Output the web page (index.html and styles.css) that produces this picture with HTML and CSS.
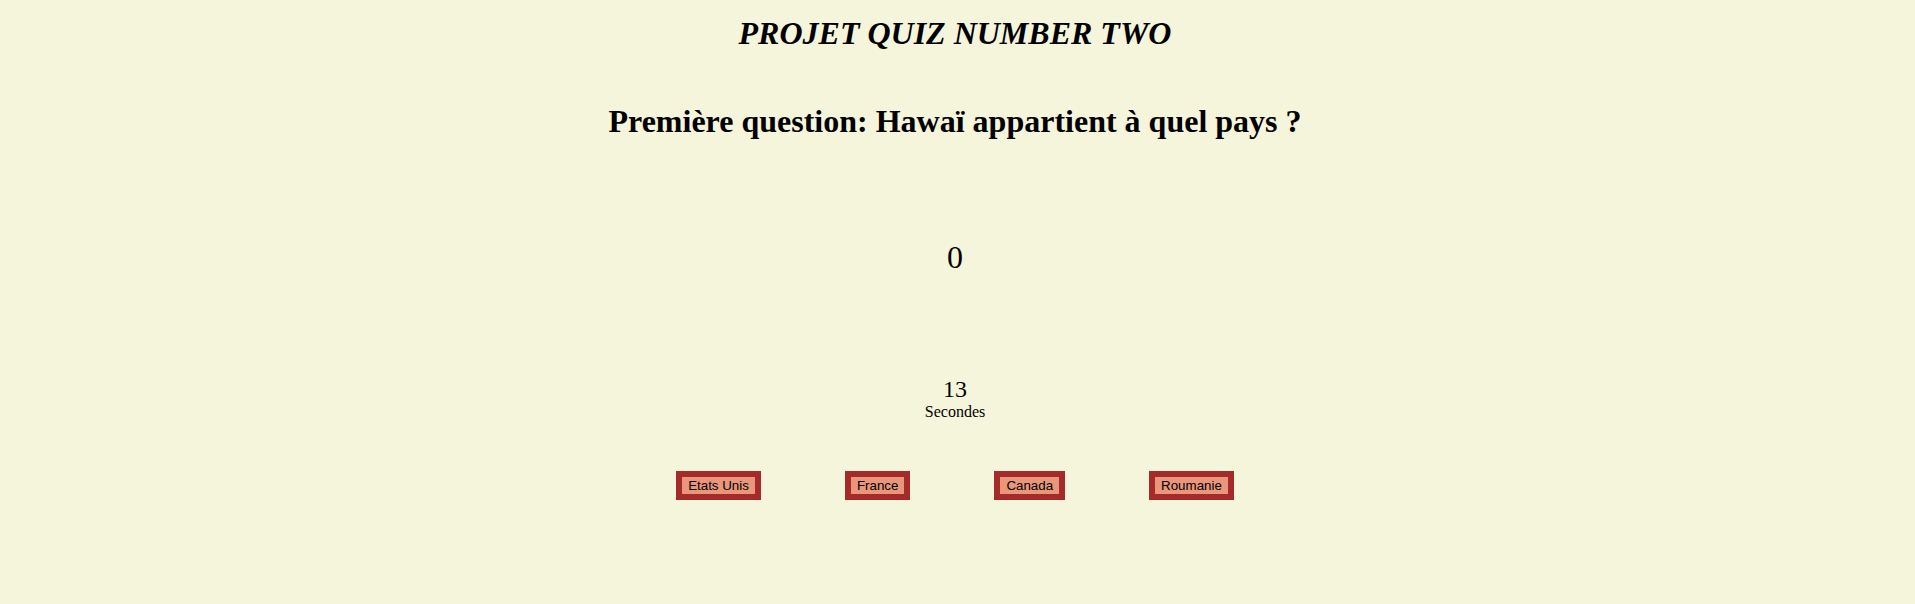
FILE: index.html
```html
<!DOCTYPE html>
<html lang="fr">
<head>
<meta charset="utf-8">
<title>Projet Quiz</title>
<link rel="stylesheet" href="styles.css">
</head>
<body>
<main class="quiz">
  <h1 class="quiz-title">PROJET QUIZ NUMBER TWO</h1>
  <h2 class="question">Première question: Hawaï appartient à quel pays ?</h2>
  <div class="score">0</div>
  <div class="timer">
    <div class="timer-value">13</div>
    <div class="timer-label">Secondes</div>
  </div>
  <div class="answers">
    <button class="answer">Etats Unis</button>
    <button class="answer">France</button>
    <button class="answer">Canada</button>
    <button class="answer">Roumanie</button>
  </div>
</main>
</body>
</html>
```
FILE: styles.css
```css
html, body {
  margin: 0;
  padding: 0;
}
body {
  background: #f5f5dc;
  font-family: "Liberation Serif", "Times New Roman", serif;
  color: #000;
  min-height: 604px;
}
.quiz {
  padding: 0 13px 0 8px;
  text-align: center;
  display: flex;
  flex-direction: column;
  align-items: stretch;
}
.quiz-title {
  margin: 15px 0 0;
  font-size: 32px;
  line-height: 37px;
  font-weight: bold;
  font-style: italic;
}
.question {
  margin: 51px 0 0;
  font-size: 32px;
  line-height: 37px;
  font-weight: bold;
}
.score {
  margin-top: 99px;
  font-size: 32px;
  line-height: 37px;
}
.timer {
  margin-top: 100px;
}
.timer-value {
  font-size: 24px;
  line-height: 27px;
}
.timer-label {
  font-size: 16px;
  line-height: 18px;
}
.answers {
  margin-top: 50px;
  display: flex;
  justify-content: center;
  gap: 84px;
}
.answer {
  font-family: "Liberation Sans", Arial, sans-serif;
  font-size: 13.333px;
  color: #000;
  background: #e9967a;
  border: 6px solid #a52a2a;
  padding: 1px 6px;
  line-height: 15px;
  margin: 0;
}
```
